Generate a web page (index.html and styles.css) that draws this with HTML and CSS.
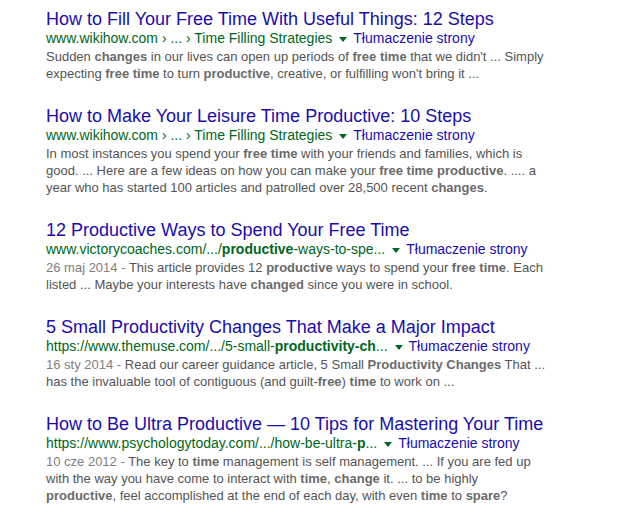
FILE: index.html
```html
<!DOCTYPE html>
<html lang="pl">
<head>
<meta charset="utf-8">
<link rel="stylesheet" href="styles.css">
</head>
<body>
<div class="results">
  <div class="g">
    <h3 class="r"><a href="#">How to Fill Your Free Time With Useful Things: 12 Steps</a></h3>
    <div class="s">
      <div class="f"><cite>www.wikihow.com › ... › Time Filling Strategies</cite><span class="arrow"></span><a class="tl" href="#">Tłumaczenie strony</a></div>
      <span class="st">Sudden <b>changes</b> in our lives can open up periods of <b>free time</b> that we didn't ... Simply expecting <b>free time</b> to turn <b>productive</b>, creative, or fulfilling won't bring it ...</span>
    </div>
  </div>
  <div class="g">
    <h3 class="r"><a href="#">How to Make Your Leisure Time Productive: 10 Steps</a></h3>
    <div class="s">
      <div class="f"><cite>www.wikihow.com › ... › Time Filling Strategies</cite><span class="arrow"></span><a class="tl" href="#">Tłumaczenie strony</a></div>
      <span class="st">In most instances you spend your <b>free time</b> with your friends and families, which is good. ... Here are a few ideas on how you can make your <b>free time productive</b>. .... a year who has started 100 articles and patrolled over 28,500 recent <b>changes</b>.</span>
    </div>
  </div>
  <div class="g">
    <h3 class="r"><a href="#">12 Productive Ways to Spend Your Free Time</a></h3>
    <div class="s">
      <div class="f"><cite>www.victorycoaches.com/.../<b>productive</b>-ways-to-spe...</cite><span class="arrow"></span><a class="tl" href="#">Tłumaczenie strony</a></div>
      <span class="st"><span class="date">26 maj 2014 - </span>This article provides 12 <b>productive</b> ways to spend your <b>free time</b>. Each listed ... Maybe your interests have <b>changed</b> since you were in school.</span>
    </div>
  </div>
  <div class="g">
    <h3 class="r"><a href="#">5 Small Productivity Changes That Make a Major Impact</a></h3>
    <div class="s">
      <div class="f"><cite>https://www.themuse.com/.../5-small-<b>productivity-ch</b>...</cite><span class="arrow"></span><a class="tl" href="#">Tłumaczenie strony</a></div>
      <span class="st"><span class="date">16 sty 2014 - </span>Read our career guidance article, 5 Small <b>Productivity Changes</b> That ... has the invaluable tool of contiguous (and guilt-<b>free</b>) <b>time</b> to work on ...</span>
    </div>
  </div>
  <div class="g">
    <h3 class="r"><a href="#">How to Be Ultra Productive — 10 Tips for Mastering Your Time</a></h3>
    <div class="s">
      <div class="f"><cite>https://www.psychologytoday.com/.../how-be-ultra-<b>p</b>...</cite><span class="arrow"></span><a class="tl" href="#">Tłumaczenie strony</a></div>
      <span class="st"><span class="date">10 cze 2012 - </span>The key to <b>time</b> management is self management. ... If you are fed up with the way you have come to interact with <b>time</b>, <b>change</b> it. ... to be highly <b>productive</b>, feel accomplished at the end of each day, with even <b>time</b> to <b>spare</b>?</span>
    </div>
  </div>
</div>
</body>
</html>
```

FILE: styles.css
```css
html, body {
  margin: 0;
  padding: 0;
  background: #fff;
}
body {
  font-family: "Liberation Sans", Arial, sans-serif;
}
.results {
  padding: 8px 0 0 46px;
  width: 505px;
}
.g {
  margin-bottom: 23px;
}
.r {
  margin: 0;
  font-size: 18px;
  font-weight: normal;
  line-height: 22px;
  white-space: nowrap;
}
.r a {
  color: #1a0dab;
  text-decoration: none;
}
.s {
  font-size: 13px;
  line-height: 17px;
  color: #545454;
}
.f {
  font-size: 14px;
  line-height: 17px;
  padding-bottom: 1px;
  white-space: nowrap;
}
cite {
  font-style: normal;
  color: #006621;
}
.arrow {
  display: inline-block;
  width: 0;
  height: 0;
  border-left: 4px solid transparent;
  border-right: 4px solid transparent;
  border-top: 5px solid #006621;
  margin: 0 6px 0 7px;
  vertical-align: middle;
}
.tl {
  color: #1a0dab;
  text-decoration: none;
}
.st b {
  color: #6a6a6a;
}
.date {
  color: #808080;
}
```
